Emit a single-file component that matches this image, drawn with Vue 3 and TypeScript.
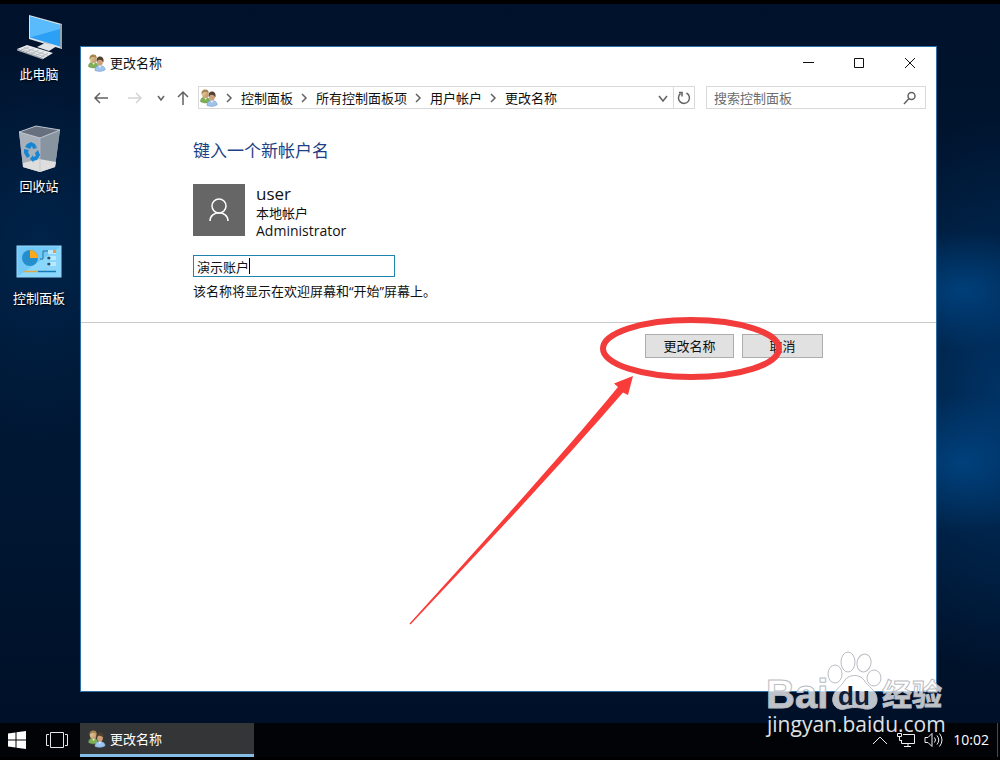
<script setup lang="ts">
import { computed, ref } from 'vue'

interface Shortcut {
  id: 'pc' | 'bin' | 'panel'
  label: string
}

const shortcuts: Shortcut[] = [
  { id: 'pc', label: '此电脑' },
  { id: 'bin', label: '回收站' },
  { id: 'panel', label: '控制面板' },
]

const crumbs: string[] = ['控制面板', '所有控制面板项', '用户帐户', '更改名称']
const accountName = ref<string>('演示账户')
const search = ref<string>('')
const caretLeft = computed(() => `calc(4px + ${accountName.value.length}em)`)
</script>

<template>
  <div class="screen" lang="zh-CN">
    <svg class="defs" width="0" height="0" aria-hidden="true">
      <defs>
        <linearGradient id="face" x1="0" y1="0" x2="1" y2="1">
          <stop offset="0" stop-color="#f3dcae" />
          <stop offset="1" stop-color="#b98a5a" />
        </linearGradient>
        <symbol id="users" viewBox="0 0 18 18">
          <path d="M.5 12.500C.5 9.500 2.500 8 5 8S10 9.500 10 13C7 14.300 2.500 14.200.5 12.500Z" fill="#7fb055" stroke="#5a8440" stroke-width=".5" />
          <path d="M4 8l1.500 3L7.500 8z" fill="#e9f1dc" />
          <ellipse cx="5.200" cy="5" rx="3.300" ry="4" fill="url(#face)" />
          <path d="M1.600 5.500C1 2 3 .4 5.400.4S9 2 8.700 4.500C7.500 3 4.500 2.500 3 3.700z" fill="#a58553" />
          <path d="M7 16.500c-.2-3.500 1.900-5 4.700-5 3.200 0 5.500 1.600 5.500 4.200-2.200 2-7.500 2.200-10.200.8z" fill="#9fc4ec" stroke="#6792c4" stroke-width=".5" />
          <path d="M10.400 11.500l1.400 2.500 1.900-2.500z" fill="#edf5fc" />
          <ellipse cx="12" cy="7.500" rx="3" ry="4" fill="#cf9f78" />
          <path d="M8.800 8.200C8.100 4.800 9.400 2.600 12 2.600s4.200 2.200 3.400 6C14.900 6.500 13 5.400 11 5.700 9.800 6 9.300 7 8.800 8.200z" fill="#51402f" />
        </symbol>
      </defs>
    </svg>

    <main class="desktop">
      <nav class="shortcuts" aria-label="桌面">
        <a v-for="item in shortcuts" :key="item.id" class="shortcut" href="#">
          <svg v-if="item.id === 'pc'" width="48" height="48" viewBox="0 0 48 48" aria-hidden="true">
            <path d="M14 3l33 9v25L14 27z" fill="#d9e2e8" />
            <path d="M15 4.500l30 8.500v21.500L15 25.500z" fill="#2ba0f5" />
            <path d="M15 4.500l30 8.500v4L15 25.500z" fill="#59bbfb" />
            <path d="M45 12l2 .5V36l-2-.5z" fill="#8fa3b0" />
            <path d="M29 30l7 2v4l-8-2z" fill="#aab4ba" />
            <path d="M22 35l8-4 12 3-8 5z" fill="#dfe4e7" />
            <path d="M2 37l10-4 26 8-10 6z" fill="#e8ebed" />
            <path d="M6 37l24 8M9 35.500l24 8M14 35l-8 3M19 36.500l-8 3.500M24 38l-8 4M29 39.500l-8 4M33 41l-7 4" stroke="#a7adb1" stroke-width=".7" fill="none" />
            <path d="M2 37l26 9v1.500L2 38.500z" fill="#9ca4a9" />
          </svg>
          <svg v-else-if="item.id === 'bin'" width="48" height="48" viewBox="0 0 48 48" aria-hidden="true">
            <path d="M4 8L21 2l24 4-5 37-15 5-17-5z" fill="#9da7b2" />
            <path d="M4 8l21 6v34L8 43z" fill="#a8b0ba" />
            <path d="M45 6l-20 8v34l15-5z" fill="#8994a1" />
            <path d="M4 8L21 2l24 4-20 8z" fill="#66707f" stroke="#d1d6dc" stroke-width=".8" />
            <path d="M8 39l16-4 17 3-1 5-15 5-17-5z" fill="#dddedd" />
            <path d="M25 14v34" stroke="#b9c0c8" stroke-width=".7" />
            <path d="M12 20l4-2 4 2 2 4-4 1-1-3-2 3-5-2zM9 25l5 1-1 2 2 4-3 2-3-5zM23 26l2 5-3 5-4 1 1 2-4-4 3-4 0 2 3-1-1-3z" fill="#1686d3" />
          </svg>
          <svg v-else width="48" height="48" viewBox="0 0 48 48" aria-hidden="true">
            <rect x="2" y="10" width="44" height="31" fill="#72c8f6" stroke="#96dcff" />
            <path d="M2 41L46 10v31z" fill="#8bd6fb" />
            <circle cx="15" cy="22" r="8" fill="#258fce" />
            <path d="M15 22v-8a8 8 0 0 1 8 8z" fill="#fba91f" />
            <path d="M25 23h3v-8h5M32 22h3M32 28h3" stroke="#28749f" fill="none" />
            <path d="M33 14h8v4h-8zM33 20h8v4h-8zM33 26h8v4h-8z" fill="#b7e9ff" />
            <circle cx="34" cy="22" r="1.500" fill="#21546e" />
            <circle cx="34" cy="28" r="1.500" fill="#21546e" />
            <path d="M38 14h3v3h-3z" fill="#f09a3c" />
            <path d="M8 35.500h15" stroke="#dba947" stroke-width="1.500" />
            <path d="M23 35.500h18" stroke="#187ab5" stroke-width="1.500" />
          </svg>
          <span>{{ item.label }}</span>
        </a>
      </nav>

      <section class="window" aria-label="更改名称">
        <header class="titlebar">
          <svg width="18" height="18" aria-hidden="true"><use href="#users" /></svg>
          <h1>更改名称</h1>
          <div class="controls">
            <button type="button" aria-label="最小化">
              <svg width="12" height="12" viewBox="0 0 12 12"><path d="M1 5.500h11" stroke="#111" /></svg>
            </button>
            <button type="button" aria-label="最大化">
              <svg width="12" height="12" viewBox="0 0 12 12"><path d="M1.500 1.500h9v9h-9z" fill="none" stroke="#111" /></svg>
            </button>
            <button type="button" aria-label="关闭">
              <svg width="12" height="12" viewBox="0 0 12 12"><path d="M1 1l10 10M11 1L1 11" stroke="#111" /></svg>
            </button>
          </div>
        </header>

        <div class="navbar">
          <div class="arrows">
            <button type="button" aria-label="后退">
              <svg width="16" height="16" viewBox="0 0 16 16"><path d="M15 8H2M7 3L2 8l5 5" /></svg>
            </button>
            <button type="button" class="dim" aria-label="前进" disabled>
              <svg width="16" height="16" viewBox="0 0 16 16"><path d="M1 8h13M9 3l5 5-5 5" /></svg>
            </button>
            <button type="button" class="recent" aria-label="最近的位置">
              <svg width="8" height="16" viewBox="0 0 8 16"><path d="M1 6l3 4 3-4" /></svg>
            </button>
            <button type="button" class="up" aria-label="上移">
              <svg width="16" height="16" viewBox="0 0 16 16"><path d="M8 15V2M3 7l5-5 5 5" /></svg>
            </button>
          </div>
          <div class="address">
            <svg class="place" width="18" height="18" aria-hidden="true"><use href="#users" /></svg>
            <template v-for="crumb in crumbs" :key="crumb">
              <svg class="sep" width="23" height="12" viewBox="0 0 23 12" aria-hidden="true"><path d="M9 2l4 4-4 4" /></svg>
              <a href="#">{{ crumb }}</a>
            </template>
            <button type="button" class="drop" aria-label="展开">
              <svg width="12" height="12" viewBox="0 0 12 12"><path d="M2 4l4 5 4-5" /></svg>
            </button>
            <button type="button" class="reload" aria-label="刷新">
              <svg width="16" height="16" viewBox="0 0 16 16"><path d="M10.500 3a5.500 5.500 0 1 1-6 .6M3 2.500h3v4" /></svg>
            </button>
          </div>
          <label class="search">
            <input v-model="search" type="text" placeholder="搜索控制面板" aria-label="搜索控制面板" />
            <svg width="14" height="14" viewBox="0 0 14 14" aria-hidden="true"><circle cx="8.500" cy="5" r="3.500" /><path d="M6 7.500L1 13" /></svg>
          </label>
        </div>

        <form class="content" @submit.prevent>
          <div class="fields">
            <h2>键入一个新帐户名</h2>
            <div class="account">
              <svg class="avatar" width="52" height="52" viewBox="0 0 52 52" aria-hidden="true">
                <circle cx="26" cy="22" r="7" />
                <path d="M17 37c0-11 18-11 18 0" />
              </svg>
              <div class="details">
                <strong>user</strong>
                <span>本地帐户</span>
                <span>Administrator</span>
              </div>
            </div>
            <div class="entry">
              <input id="account-name" v-model="accountName" type="text" aria-describedby="name-note" aria-label="新帐户名" />
              <i class="caret" :style="{ left: caretLeft }"></i>
            </div>
            <label id="name-note" for="account-name">该名称将显示在欢迎屏幕和“开始”屏幕上。</label>
          </div>
          <div class="actions">
            <div class="buttons">
              <button type="submit" class="primary">更改名称</button>
              <button type="button">取消</button>
              <svg class="mark" width="390" height="320" viewBox="0 0 390 320" aria-hidden="true">
                <ellipse cx="291" cy="38.500" rx="88" ry="28.500" fill="none" stroke="#f23b3b" stroke-width="6" />
                <path d="M233 66L214 73.500l4 3.500C164 143 84 231 9.500 313.500l1 1C90 231 168 146 223 82.500l5 2.500z" fill="#f93b39" />
              </svg>
            </div>
          </div>
        </form>
      </section>
    </main>

    <footer class="taskbar">
      <button type="button" class="start" aria-label="开始">
        <svg width="18" height="18" viewBox="0 0 18 18"><path d="M0 2.500L7.500 1.500v7H0zM8.500 1.300L18 0v8.500H8.500zM0 9.500h7.500v7L0 15.500zM8.500 9.500H18V18l-9.500-1.300z" fill="#fff" /></svg>
      </button>
      <button type="button" class="view" aria-label="任务视图">
        <svg width="22" height="18" viewBox="0 0 22 18"><path d="M4.500 1.500h13v15h-13zM3 3.500H.5v11H3M19 3.500h2.500v11H19" fill="none" stroke="#e6e6e6" /></svg>
      </button>
      <button type="button" class="task">
        <svg width="18" height="18" aria-hidden="true"><use href="#users" /></svg>
        <span>更改名称</span>
      </button>
      <div class="tray">
        <svg width="16" height="16" viewBox="0 0 16 16" aria-hidden="true"><path d="M1 12l7-7 7 7" /></svg>
        <svg width="18" height="16" viewBox="0 0 18 16" aria-hidden="true"><path d="M6 2.500h11.500v9H4.500V8M11 11.500v3M7 14.500h7M.5 1.500h4v3h-4zM2.500 4.500v4h2" /></svg>
        <svg width="20" height="16" viewBox="0 0 20 16" aria-hidden="true"><path d="M1 5.500h3l4-4v13l-4-4H1zM10.500 5.500q2 2.500 0 5M13 3.500q3.500 4.500 0 9M15.500 1.500q5 6.500 0 13" /></svg>
        <time>10:02</time>
      </div>
    </footer>

    <svg class="watermark" width="190" height="96" viewBox="0 0 190 96" role="img" aria-label="Baidu 经验 jingyan.baidu.com">
      <g class="ink">
        <text x="3" y="57" class="brand">Bai</text>
        <path d="M70 46C72 38 78 36 82 29c4-6 15-6 19 0 4 7 12 10 13 18 1 8-5 12-12 11-7-2-13-2-20 0s-14-4-12-12z" />
        <ellipse cx="72" cy="23" rx="7" ry="9" />
        <ellipse cx="85" cy="11" rx="7" ry="10" />
        <ellipse cx="101" cy="12" rx="7" ry="9" transform="rotate(12 101 12)" />
        <ellipse cx="111" cy="27" rx="7" ry="8" />
        <text x="119" y="54" class="han">经验</text>
      </g>
      <text x="91" y="54" class="du" text-anchor="middle">du</text>
      <text x="4" y="81" class="url">jingyan.baidu.com</text>
    </svg>
  </div>
</template>

<style>
html,
body {
  margin: 0;
}
</style>

<style scoped>
.screen {
  position: relative;
  box-sizing: border-box;
  display: flex;
  flex-direction: column;
  min-height: 100vh;
  border-top: 4px solid #000;
  border-bottom: 3px solid #000;
  background:
    radial-gradient(ellipse 100px 60px at 96% 38%, rgba(0, 80, 150, 0.6), transparent),
    radial-gradient(ellipse 100px 70px at 96% 61%, rgba(0, 80, 150, 0.6), transparent),
    radial-gradient(ellipse 160px 280px at 100% 52%, rgba(0, 62, 122, 0.7), transparent),
    radial-gradient(ellipse 140px 200px at 4% 32%, rgba(0, 44, 90, 0.6), transparent),
    linear-gradient(#00122b, #001733 40%, #001733 65%, #000f26);
  font-family: "Open Sans", "Noto Sans CJK SC", sans-serif;
  font-size: 13px;
  line-height: 18px;
  color: #111;
}
.defs {
  position: absolute;
}
button {
  display: flex;
  align-items: center;
  justify-content: center;
  padding: 0;
  border: 0;
  background: none;
  font: inherit;
  color: inherit;
}
a {
  color: inherit;
  text-decoration: none;
}
svg {
  flex: none;
}
.desktop {
  flex: 1;
  display: flex;
  padding: 0 63px 31px 0;
}
.shortcuts {
  width: 80px;
  flex: none;
  padding-top: 8px;
}
.shortcut {
  display: flex;
  flex-direction: column;
  align-items: center;
  gap: 5px;
  height: 112px;
  padding-right: 2px;
  color: #fff;
  text-shadow: 1px 1px 2px #000;
}
.window {
  flex: 1;
  display: flex;
  flex-direction: column;
  min-width: 0;
  margin-top: 42px;
  border: 1px solid #2b6fa5;
  background: #fff;
}
.titlebar {
  display: flex;
  align-items: center;
  gap: 4px;
  height: 32px;
  padding: 0 1px 0 7px;
}
h1 {
  margin: 0;
  font-size: 13px;
  font-weight: 400;
}
.controls {
  display: flex;
  margin-left: auto;
}
.controls button {
  width: 51px;
  height: 32px;
}
.navbar {
  display: flex;
  padding: 7px 10px 0 12px;
}
.navbar svg {
  fill: none;
  stroke: #626262;
  stroke-width: 1.5;
}
.arrows {
  display: flex;
  align-items: center;
  width: 105px;
}
.arrows .dim {
  margin-left: 18px;
}
.arrows .recent {
  margin-left: 14px;
}
.arrows .up {
  margin-left: 10px;
}
.arrows .dim svg {
  stroke: #d4d4d4;
}
.address {
  flex: 1;
  display: flex;
  align-items: center;
  min-width: 0;
  height: 21px;
  padding-left: 1px;
  border: 1px solid #d9d9d9;
  white-space: nowrap;
}
.address .place {
  stroke: none;
}
.drop {
  width: 20px;
  height: 21px;
  margin-left: auto;
}
.reload {
  width: 21px;
  height: 21px;
  border-left: 1px solid #d9d9d9;
}
.search {
  box-sizing: border-box;
  display: flex;
  align-items: center;
  width: 220px;
  height: 23px;
  margin-left: 11px;
  padding: 0 8px 0 7px;
  border: 1px solid #d9d9d9;
}
.search input {
  flex: 1;
  min-width: 0;
  padding: 0;
  border: 0;
  outline: 0;
  background: none;
  font: inherit;
}
.search input::placeholder {
  color: #6d6d6d;
  opacity: 1;
}
.content {
  flex: 1;
}
.fields {
  padding: 28px 112px 22px;
  border-bottom: 1px solid #c8c8c8;
}
h2 {
  margin: 0 0 19px;
  font-size: 17px;
  font-weight: 400;
  line-height: 28px;
  color: #1d3f86;
}
.account {
  display: flex;
  gap: 11px;
  height: 52px;
}
.avatar {
  background: #666;
  fill: none;
  stroke: #fff;
  stroke-width: 1.5;
}
.details {
  display: flex;
  flex-direction: column;
}
.details strong {
  font-size: 17px;
  font-weight: 400;
  line-height: 20px;
}
.details span:last-child {
  font-size: 14px;
}
.entry {
  position: relative;
  width: 202px;
  margin: 19px 0 5px;
}
.entry input {
  box-sizing: border-box;
  display: block;
  width: 100%;
  height: 22px;
  padding: 0 3px;
  border: 1px solid #1f84ad;
  outline: 0;
  font: inherit;
  color: inherit;
  caret-color: transparent;
}
.caret {
  position: absolute;
  top: 3px;
  width: 1px;
  height: 16px;
  background: #000;
}
.actions {
  display: flex;
  justify-content: flex-end;
  padding: 11px 113px 0;
}
.buttons {
  position: relative;
  display: flex;
  gap: 8px;
}
.buttons button {
  width: 81px;
  height: 24px;
  border: 1px solid #adadad;
  background: #e1e1e1;
}
.buttons .primary {
  width: 89px;
}
.mark {
  position: absolute;
  top: -24px;
  left: -245px;
  pointer-events: none;
}
.taskbar {
  display: flex;
  height: 34px;
  background: #020307;
  color: #fff;
}
.start {
  width: 34px;
}
.view {
  width: 46px;
}
.task {
  box-sizing: border-box;
  justify-content: flex-start;
  gap: 4px;
  width: 174px;
  padding-left: 8px;
  border-bottom: 3px solid #84bde5;
  background: #343536;
}
.tray {
  display: flex;
  align-items: center;
  gap: 9px;
  margin: 0 2px 0 auto;
  padding-right: 8px;
  border-right: 1px solid #4a4a4a;
}
.tray svg {
  fill: none;
  stroke: #f0f0f0;
}
.tray time {
  font-size: 14px;
}
.watermark {
  position: absolute;
  right: 47px;
  bottom: 10px;
  pointer-events: none;
}
.ink {
  fill: #fff;
  fill-opacity: 0.75;
  stroke: #b9bcc2;
  stroke-width: 1;
}
.brand {
  font-family: "Liberation Sans", sans-serif;
  font-size: 40px;
  font-weight: 700;
}
.du {
  font-family: "Liberation Sans", sans-serif;
  font-size: 26px;
  font-weight: 700;
  fill: #101d38;
}
.han {
  font-size: 30px;
  font-weight: 700;
}
.url {
  font-size: 21px;
  fill: #dfe1e5;
}
</style>
